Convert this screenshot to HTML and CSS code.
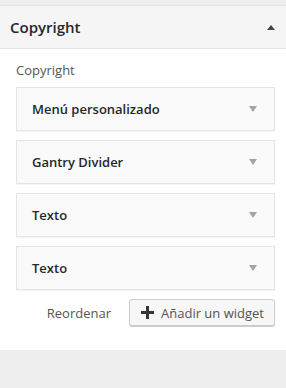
FILE: index.html
```html
<!DOCTYPE html>
<html lang="es">
<head>
  <meta charset="UTF-8">
  <meta name="viewport" content="width=device-width, initial-scale=1.0">
  <title>Copyright</title>
  <link rel="stylesheet" href="styles.css">
</head>
<body>
  <div class="section">
    <h3 class="section-title">
      Copyright
      <span class="caret-up"></span>
    </h3>
    <div class="section-content">
      <p class="sidebar-label">Copyright</p>
      <div class="widget-list">
        <div class="widget">
          <span class="widget-title">Menú personalizado</span>
          <span class="caret-down"></span>
        </div>
        <div class="widget">
          <span class="widget-title">Gantry Divider</span>
          <span class="caret-down"></span>
        </div>
        <div class="widget">
          <span class="widget-title">Texto</span>
          <span class="caret-down"></span>
        </div>
        <div class="widget">
          <span class="widget-title">Texto</span>
          <span class="caret-down"></span>
        </div>
      </div>
      <div class="widget-actions">
        <a class="reorder" href="#">Reordenar</a>
        <button type="button" class="add-widget">
          <svg width="13" height="13" viewBox="0 0 13 13" aria-hidden="true">
            <rect x="5" y="0" width="3" height="13" fill="#32373c"/>
            <rect x="0" y="5" width="13" height="3" fill="#32373c"/>
          </svg>
          Añadir un widget
        </button>
      </div>
    </div>
  </div>
  <div class="footer-space"></div>
</body>
</html>
```

FILE: styles.css
```css
body {
  margin: 0;
  font-family: "Open Sans", "DejaVu Sans", sans-serif;
  font-size: 13px;
  color: #555;
  background-color: #eee;
  padding-top: 5px;
}
.section {
  background-color: #fff;
}
.section-title {
  display: flex;
  justify-content: space-between;
  align-items: center;
  margin: 0;
  height: 42px;
  padding: 0 10px;
  background-color: #f5f5f5;
  border-top: 1px solid #e5e5e5;
  border-bottom: 1px solid #e5e5e5;
  font-size: 15px;
  font-weight: 600;
  color: #23282d;
}
.caret-up {
  width: 0;
  height: 0;
  margin-right: 1px;
  border-left: 4px solid transparent;
  border-right: 4px solid transparent;
  border-bottom: 5px solid #444;
}
.section-content {
  padding: 12px 11px 24px 16px;
}
.sidebar-label {
  margin: 0 0 8px;
  line-height: 18px;
  color: #555;
}
.widget-list {
  display: flex;
  flex-direction: column;
  gap: 9px;
}
.widget {
  display: flex;
  justify-content: space-between;
  align-items: center;
  height: 42px;
  padding: 0 17px 0 15px;
  background-color: #fafafa;
  border: 1px solid #e5e5e5;
  box-shadow: 0 1px 1px rgba(0, 0, 0, 0.04);
}
.widget-title {
  font-weight: 600;
  color: #23282d;
}
.caret-down {
  width: 0;
  height: 0;
  border-left: 4px solid transparent;
  border-right: 4px solid transparent;
  border-top: 6px solid #a0a5aa;
}
.widget-actions {
  display: flex;
  justify-content: flex-end;
  align-items: center;
  gap: 18px;
  margin-top: 9px;
}
.reorder {
  color: #555;
  text-decoration: none;
}
.add-widget {
  display: flex;
  align-items: center;
  gap: 7px;
  height: 27px;
  padding: 0 10px 0 11px;
  background-color: #f7f7f7;
  border: 1px solid #ccc;
  border-radius: 3px;
  box-shadow: 0 1px 0 #ccc;
  font-family: inherit;
  font-size: 13px;
  color: #555;
  cursor: pointer;
}
.footer-space {
  height: 38px;
}
```
